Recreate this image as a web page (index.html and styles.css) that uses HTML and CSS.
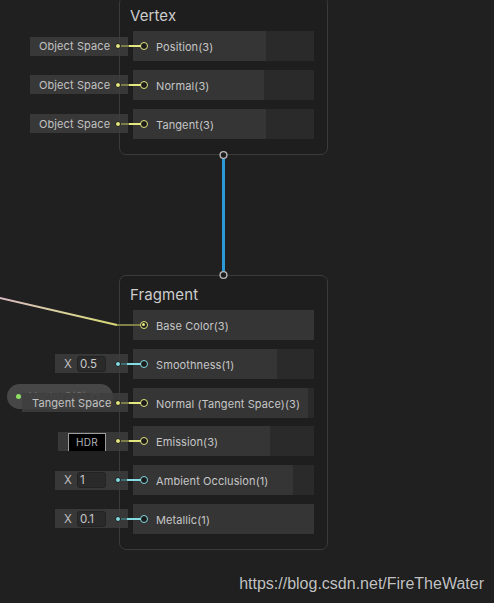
FILE: index.html
```html
<!DOCTYPE html>
<html lang="en">
<head>
<meta charset="utf-8">
<title>Shader Graph - Master Stack</title>
<link rel="stylesheet" href="styles.css">
</head>
<body>
<div class="canvas">

  <div class="ghost-node">
    <span class="ghost-dot"></span>
    <span class="ghost-label">Vector2(2)</span>
    <span class="ghost-port"></span>
  </div>

  <div class="node node-vertex">
    <div class="node-title">Vertex</div>
    <div class="ports">
      <div class="port-row">
        <div class="field field-text v3"><span class="field-label">Object Space</span><span class="field-dot"></span></div>
        <span class="wire v3"></span>
        <div class="slot" style="width:133px"><span class="port v3"></span><span class="port-label">Position(3)</span></div>
      </div>
      <div class="port-row">
        <div class="field field-text v3"><span class="field-label">Object Space</span><span class="field-dot"></span></div>
        <span class="wire v3"></span>
        <div class="slot" style="width:131px"><span class="port v3"></span><span class="port-label">Normal(3)</span></div>
      </div>
      <div class="port-row">
        <div class="field field-text v3"><span class="field-label">Object Space</span><span class="field-dot"></span></div>
        <span class="wire v3"></span>
        <div class="slot" style="width:133px"><span class="port v3"></span><span class="port-label">Tangent(3)</span></div>
      </div>
    </div>
  </div>

  <div class="node node-fragment">
    <div class="node-title">Fragment</div>
    <div class="ports">
      <div class="port-row">
        <div class="slot" style="width:181px"><span class="port v3 connected"></span><span class="port-label">Base Color(3)</span></div>
      </div>
      <div class="port-row">
        <div class="field field-num v1"><span class="field-axis">X</span><span class="num-box">0.5</span><span class="field-dot"></span></div>
        <span class="wire v1"></span>
        <div class="slot" style="width:144px"><span class="port v1"></span><span class="port-label">Smoothness(1)</span></div>
      </div>
      <div class="port-row">
        <div class="field field-text field-wide v3"><span class="field-label">Tangent Space</span><span class="field-dot"></span></div>
        <span class="wire v3"></span>
        <div class="slot" style="width:175px"><span class="port v3"></span><span class="port-label">Normal (Tangent Space)(3)</span></div>
      </div>
      <div class="port-row">
        <div class="field field-color v3"><span class="hdr-swatch">HDR</span><span class="field-dot"></span></div>
        <span class="wire v3"></span>
        <div class="slot" style="width:137px"><span class="port v3"></span><span class="port-label">Emission(3)</span></div>
      </div>
      <div class="port-row">
        <div class="field field-num v1"><span class="field-axis">X</span><span class="num-box">1</span><span class="field-dot"></span></div>
        <span class="wire v1"></span>
        <div class="slot" style="width:160px"><span class="port v1"></span><span class="port-label">Ambient Occlusion(1)</span></div>
      </div>
      <div class="port-row">
        <div class="field field-num v1"><span class="field-axis">X</span><span class="num-box">0.1</span><span class="field-dot"></span></div>
        <span class="wire v1"></span>
        <div class="slot" style="width:181px"><span class="port v1"></span><span class="port-label">Metallic(1)</span></div>
      </div>
    </div>
  </div>

  <svg class="edges" width="494" height="603" viewBox="0 0 494 603">
    <defs>
      <linearGradient id="edgeGrad" x1="0" y1="0" x2="117" y2="0" gradientUnits="userSpaceOnUse">
        <stop offset="0" stop-color="#d9b9c2"/>
        <stop offset="0.55" stop-color="#d9d39a"/>
        <stop offset="1" stop-color="#d6d872"/>
      </linearGradient>
    </defs>
    <path d="M-2 297.6 L117 325" stroke="url(#edgeGrad)" stroke-width="2" fill="none"/>
    <path d="M117 325 L140 325" stroke="#7f7f48" stroke-width="2" fill="none"/>
    <line x1="223.5" y1="158.5" x2="223.5" y2="271.5" stroke="#2c9ad8" stroke-width="3"/>
    <circle cx="223.5" cy="155" r="3.4" fill="#1e1e1e" stroke="#b8b8b8" stroke-width="1.4"/>
    <circle cx="223.5" cy="275" r="3.4" fill="#1e1e1e" stroke="#b8b8b8" stroke-width="1.4"/>
  </svg>

  <div class="watermark">https://blog.csdn.net/FireTheWater</div>
</div>
</body>
</html>
```

FILE: styles.css
```css
* { box-sizing: border-box; }

html, body {
  margin: 0;
  padding: 0;
  background: #202020;
}

.canvas {
  position: relative;
  width: 494px;
  height: 603px;
  overflow: hidden;
  background: #202020;
  font-family: Inter, "Noto Sans", "Liberation Sans", sans-serif;
  color: #c4c4c4;
}

/* ---------- nodes ---------- */
.node {
  position: absolute;
  left: 119px;
  width: 209px;
  background: #1e1e1e;
  border: 1px solid #3a3a3a;
  border-radius: 7px;
  padding-bottom: 15px;
}
.node-vertex { top: -4px; }
.node-fragment { top: 275px; }

.node-title {
  padding: 8px 0 0 10px;
  height: 34px;
  font-size: 15px;
  line-height: 22px;
  color: #cdcdcd;
  letter-spacing: 0.1px;
}

.ports {
  display: flex;
  flex-direction: column;
  gap: 8.8px;
  margin-left: 13px;
  width: 181px;
}

.port-row {
  position: relative;
  height: 30px;
  background: #2a2a2a;
  display: flex;
}

.slot {
  height: 100%;
  background: #353535;
  display: flex;
  align-items: center;
}

.port {
  width: 8px;
  height: 8px;
  margin-left: 7px;
  border-radius: 50%;
  border: 1.5px solid currentColor;
  background: #1b1b1b;
  flex: none;
  position: relative;
}
.port.connected::after {
  content: "";
  position: absolute;
  left: 1px;
  top: 1px;
  width: 3px;
  height: 3px;
  border-radius: 50%;
  background: currentColor;
}

.port-label {
  margin-left: 8px;
  font-size: 11px;
  letter-spacing: 0.1px;
  color: #c6c6c6;
  white-space: nowrap;
  padding-top: 2px;
}

.v3 { color: #e4e67e; }
.v1 { color: #84dbe2; }

/* ---------- inline input fields ---------- */
.field {
  position: absolute;
  right: calc(100% + 5px);
  top: 5.5px;
  height: 19px;
  background: rgba(62, 62, 62, 0.82);
  display: flex;
  align-items: center;
  z-index: 2;
}
.field-text { width: 98px; padding-left: 9px; }
.field-wide { width: 106px; padding-left: 10px; background: rgba(62, 62, 62, 0.86); }
.field-num { width: 73px; padding-left: 9px; }
.field-color { width: 70px; padding-left: 10px; align-items: stretch; }

.field-label {
  font-size: 11px;
  letter-spacing: 0.1px;
  color: #c2c2c2;
  white-space: nowrap;
}

.field-dot {
  margin-left: auto;
  margin-right: 7px;
  width: 6px;
  height: 6px;
  border-radius: 50%;
  background: currentColor;
  border: 1px solid #1c1c1c;
  flex: none;
  align-self: center;
}

.field-axis {
  font-size: 11.5px;
  color: #bdbdbd;
  width: 13px;
}
.num-box {
  width: 29px;
  height: 16px;
  background: #2a2a2a;
  border: 1px solid #232323;
  border-radius: 3px;
  font-size: 11.5px;
  color: #c8c8c8;
  line-height: 14px;
  padding-left: 2px;
}

.hdr-swatch {
  margin-top: 1px;
  width: 38px;
  background: #000;
  border: 1px solid #9c9c9c;
  border-bottom: none;
  font-size: 10px;
  color: #b4b4b4;
  text-align: center;
  line-height: 16px;
  letter-spacing: 0.3px;
}

.wire {
  position: absolute;
  left: -12px;
  top: 14px;
  width: 20px;
  height: 2px;
  z-index: 3;
}
.wire.v3 { background: linear-gradient(to right, #7d7d4a 0, #7d7d4a 8px, #e4e67e 8px); }
.wire.v1 { background: linear-gradient(to right, #3f6c70 0, #3f6c70 6px, #84dbe2 6px); }

/* ---------- collapsed Vector2 node behind the normal field ---------- */
.ghost-node {
  position: absolute;
  left: 7px;
  top: 384px;
  width: 106px;
  height: 25px;
  border-radius: 12.5px;
  background: #474747;
  display: flex;
  align-items: center;
}
.ghost-dot {
  width: 5px;
  height: 5px;
  margin-left: 9px;
  border-radius: 50%;
  background: #8ee065;
}
.ghost-label {
  margin-left: 8px;
  font-size: 11.5px;
  color: #6d6d6d;
}
.ghost-port {
  margin-left: auto;
  margin-right: 14px;
  width: 8px;
  height: 8px;
  border-radius: 50%;
  border: 1.5px solid #6f8a66;
}

/* ---------- wires overlay ---------- */
.edges {
  position: absolute;
  left: 0;
  top: 0;
  z-index: 4;
  pointer-events: none;
}

.watermark {
  position: absolute;
  right: 10px;
  top: 575px;
  font-family: "Liberation Sans", Arial, sans-serif;
  font-size: 16px;
  line-height: 18px;
  color: #c2c2c2;
  text-shadow: 0 0 1px #101010;
  z-index: 5;
}
```
